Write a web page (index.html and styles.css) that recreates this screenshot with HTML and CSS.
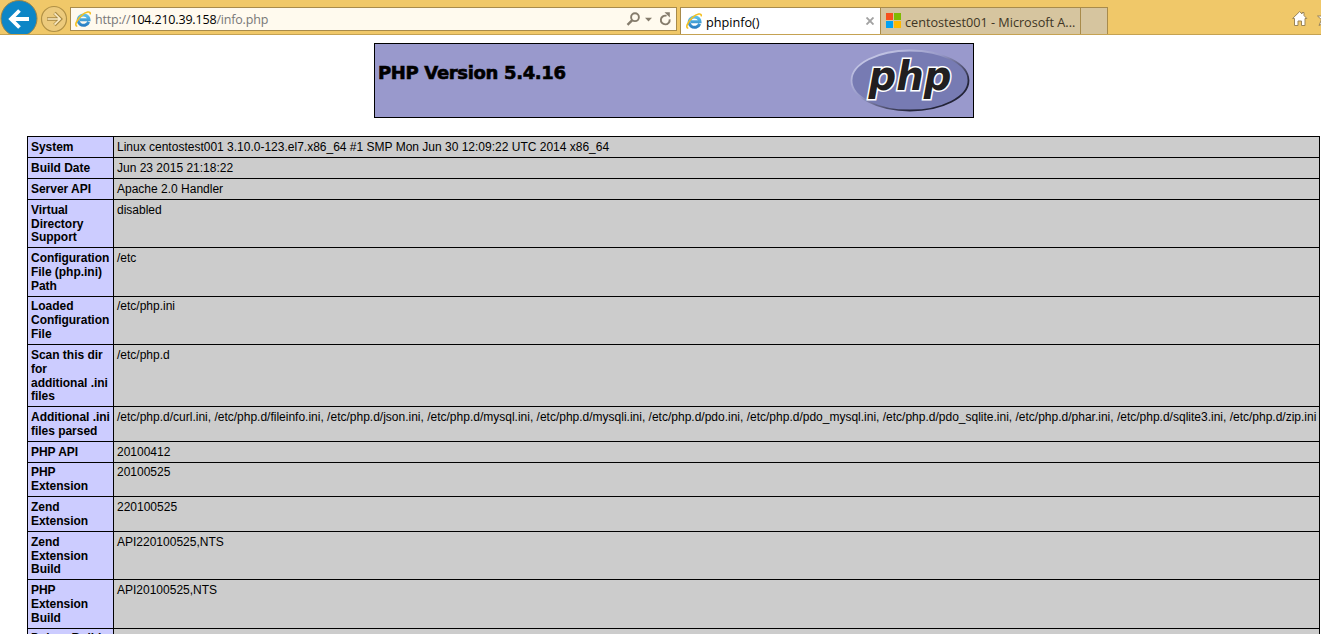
FILE: index.html
```
<!DOCTYPE html>
<html lang="en">
<head>
<meta charset="utf-8">
<title>phpinfo()</title>
<link rel="stylesheet" href="styles.css">
</head>
<body>
<svg class="defs" width="0" height="0" aria-hidden="true">
  <defs>
    <linearGradient id="blue" x1="0" y1="0" x2="0" y2="1"><stop offset="0" stop-color="#5cc0ea"/><stop offset="1" stop-color="#2a80c4"/></linearGradient>
    <symbol id="ie" viewBox="0 0 16 16">
      <path d="M13.700 10.900A5.400 5.200 0 1 1 14 8.700H5" fill="none" stroke="url(#blue)" stroke-width="3"/>
      <path d="M2.300 15.200C-1 15 1.600 8.700 6.400 4.600 10.500 1 16 -.8 15.200 3.400" fill="none" stroke="#f4c022" stroke-width="1.600"/>
    </symbol>
  </defs>
</svg>
<header class="chrome">
  <svg class="back" width="38" height="34" viewBox="0 0 38 34"><circle cx="19" cy="18.500" r="18" fill="#0c86c6" stroke="#98854d"/><path d="M29 19H11M19.500 10.500L11 19l8.500 8.500" fill="none" stroke="#fff" stroke-width="3.800"/></svg>
  <svg class="forward" width="28" height="34" viewBox="0 0 28 34"><circle cx="14" cy="19" r="12.500" fill="#ecca7c" stroke="#b09045" stroke-width="1.200"/><path d="M7 19H20M14.500 13l6 6-6 6" fill="none" stroke="#a58741" stroke-width="3.400"/><path d="M7.500 19H20M14.500 13.300l5.700 5.700-5.700 5.700" fill="none" stroke="#fbebc4" stroke-width="1.700"/></svg>
  <div class="address">
    <svg class="ie" width="16" height="16"><use href="#ie"/></svg>
    <span class="url">http://<b>104.210.39.158</b>/info.php</span>
    <svg class="tools" width="50" height="22" viewBox="0 0 50 22" fill="none" stroke="#857c6c">
      <circle cx="9" cy="9.200" r="3.900" stroke-width="1.900"/><path d="M6.300 12.200L1.500 16.800" stroke-width="2.400"/>
      <path d="M19 9.800h7l-3.500 3.800z" fill="#857c6c" stroke="none"/>
      <path d="M43.600 11.300A4.400 4.400 0 1 1 40.500 7.800" stroke-width="1.900"/><path d="M38.500 4.200h5.300v5.300z" fill="#857c6c" stroke="none"/>
    </svg>
  </div>
  <div class="tab active">
    <svg class="ie" width="16" height="16"><use href="#ie"/></svg>
    <span class="title">phpinfo()</span>
    <svg class="close" width="8" height="8" viewBox="0 0 8 8"><path d="M.5.5l7 7M7.500.5l-7 7" stroke="#a2a2a2" stroke-width="1.900"/></svg>
  </div>
  <div class="tab other">
    <svg class="ms" width="15" height="15" viewBox="0 0 15 15"><path fill="#f6511d" d="M0 0h7v7H0z"/><path fill="#7fba00" d="M8 0h7v7H8z"/><path fill="#00a1f1" d="M0 8h7v7H0z"/><path fill="#ffb900" d="M8 8h7v7H8z"/></svg>
    <span class="title">centostest001 - Microsoft A...</span>
  </div>
  <div class="newtab"></div>
  <svg class="actions" width="30" height="18" viewBox="0 0 30 18" stroke="#9b8558" fill="#fff">
    <path d="M3.500 8.500v7h3.500v-4.500h3.500v4.500H14v-7h1.800L13 5.500V2.500h-2V4L8.700 1.500 1.600 8.500z"/>
    <path d="M34 1.500l-2.300 4.500H26.500l4 3.700-2.500 5.800 6-3z"/>
  </svg>
</header>
<main>
  <section class="banner">
    <h1>PHP Version 5.4.16</h1>
    <svg class="logo" width="120" height="67" viewBox="0 0 120 67">
      <defs><linearGradient id="rim" x1="0" y1="0" x2="1" y2="1"><stop offset=".1" stop-color="#c9cbe8"/><stop offset=".42" stop-color="#9799c8"/><stop offset=".75" stop-color="#25263c"/><stop offset="1" stop-color="#202030"/></linearGradient></defs>
      <ellipse cx="60" cy="33.500" rx="58.500" ry="30" fill="#777bb3" stroke="url(#rim)" stroke-width="1.800"/>
      <text x="18.500" y="43" textLength="83" lengthAdjust="spacingAndGlyphs">php</text>
    </svg>
  </section>
  <table>
    <colgroup><col class="key"><col></colgroup>
    <tbody>
    <tr class="one"><th>System</th><td>Linux centostest001 3.10.0-123.el7.x86_64 #1 SMP Mon Jun 30 12:09:22 UTC 2014 x86_64</td></tr>
    <tr class="one"><th>Build Date</th><td>Jun 23 2015 21:18:22</td></tr>
    <tr class="one"><th>Server API</th><td>Apache 2.0 Handler</td></tr>
    <tr class="three snug"><th>Virtual<br>Directory<br>Support</th><td>disabled</td></tr>
    <tr class="three tall"><th>Configuration<br>File (php.ini)<br>Path</th><td>/etc</td></tr>
    <tr class="three high"><th>Loaded<br>Configuration<br>File</th><td>/etc/php.ini</td></tr>
    <tr class="four"><th>Scan this dir<br>for<br>additional .ini<br>files</th><td>/etc/php.d</td></tr>
    <tr class="two tall"><th>Additional .ini<br>files parsed</th><td>/etc/php.d/curl.ini, /etc/php.d/fileinfo.ini, /etc/php.d/json.ini, /etc/php.d/mysql.ini, /etc/php.d/mysqli.ini, /etc/php.d/pdo.ini, /etc/php.d/pdo_mysql.ini, /etc/php.d/pdo_sqlite.ini, /etc/php.d/phar.ini, /etc/php.d/sqlite3.ini, /etc/php.d/zip.ini</td></tr>
    <tr class="one"><th>PHP API</th><td>20100412</td></tr>
    <tr class="two high"><th>PHP<br>Extension</th><td>20100525</td></tr>
    <tr class="two tall"><th>Zend<br>Extension</th><td>220100525</td></tr>
    <tr class="three snug"><th>Zend<br>Extension<br>Build</th><td>API220100525,NTS</td></tr>
    <tr class="three tall"><th>PHP<br>Extension<br>Build</th><td>API20100525,NTS</td></tr>
    <tr class="one high"><th>Debug Build</th><td></td></tr>
    </tbody>
  </table>
</main>
</body>
</html>
```
FILE: styles.css
```
* { box-sizing: border-box; }
html, body { height: 100%; }
body { margin: 0; background: #fff; color: #000; overflow: hidden; font-family: "Liberation Sans", Arial, sans-serif; }
svg { display: block; flex: none; }
.defs { position: absolute; }

.chrome { display: flex; height: 35px; background: #f0c869; border-bottom: 1px solid #c5a252; overflow: hidden; font-family: "Open Sans", sans-serif; }
.forward { margin-left: 2px; }
.address { display: flex; flex: none; width: 607px; height: 24px; margin: 7px 0 0 2px; padding-left: 4px; background: #fffaee; border: 1px solid #a88b4b; }
.address .ie { margin-top: 3px; }
.url { margin-left: 4px; font-size: 12.5px; line-height: 24px; letter-spacing: -.18px; color: #777; white-space: nowrap; }
.url b { font-weight: 400; color: #000; }
.tools { margin-left: auto; }
.tab, .newtab { display: flex; flex: none; height: 27px; margin-top: 7px; border: 1px solid #a88b4b; border-bottom: 0; }
.tab { width: 201px; padding: 5px 5px 0; }
.tab .title { margin: 1px 0 0 4px; font-size: 12.7px; line-height: 16px; letter-spacing: -.03px; white-space: nowrap; }
.active { margin-left: 3px; background: #fff; }
.active .close { margin: 4px 1px 0 auto; }
.other { width: 200px; background: #d6c59f; border-left: 0; color: #3e3525; }
.newtab { width: 27px; border-left: 0; background: #d6c59f; }
.actions { margin: 10px 0 0 auto; }

.banner { display: flex; justify-content: space-between; width: 600px; height: 75px; margin: 8px 0 0 374px; padding: 3px; background: #9999cc; border: 1px solid #000; }
.banner h1 { margin: 14px 0 0; font: 700 18px/24px "DejaVu Sans", sans-serif; letter-spacing: -.34px; -webkit-text-stroke: .6px #000; white-space: nowrap; }
.logo text { font: italic 700 40px "DejaVu Sans", sans-serif; fill: #211e20; stroke: #fff; stroke-width: 3.2px; paint-order: stroke; }

table { width: 1293px; margin: 18px 0 0 27px; table-layout: fixed; border-collapse: collapse; font-size: 12px; line-height: 13.8px; }
.key { width: 86px; }
th, td { padding: 4px 2px 0 3px; border: 1px solid #000; vertical-align: top; text-align: left; white-space: nowrap; }
th { background: #ccccff; letter-spacing: -.03px; }
td { background: #cccccc; }
.one { height: 21px; }
.two { height: 34px; }
.two.tall { height: 35px; }
.three { height: 48px; }
.three.tall { height: 49px; }
.four { height: 62px; }
.high th, .high td { padding-top: 3px; }
.snug th { line-height: 13.5px; }
```
